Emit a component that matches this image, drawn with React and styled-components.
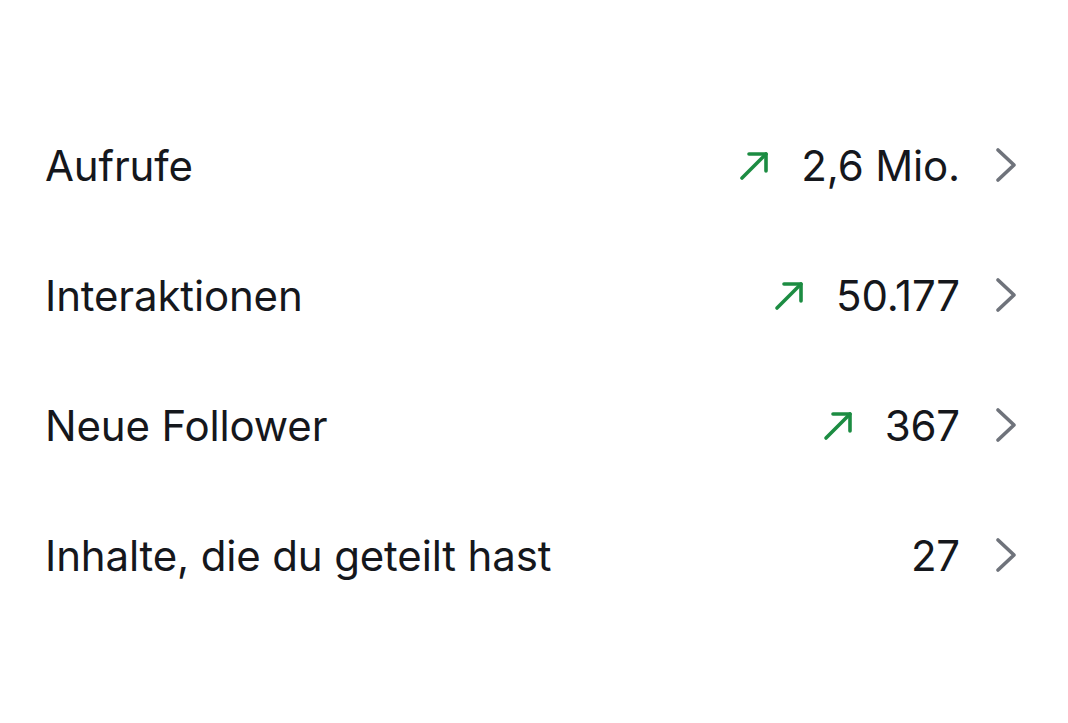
import React from "react";
import styled, { createGlobalStyle } from "styled-components";

const Global = createGlobalStyle`
  html, body { margin: 0; padding: 0; background: #ffffff; }
  body { font-family: Inter, "Noto Sans", sans-serif; -webkit-font-smoothing: antialiased; }
`;

const List = styled.div`
  display: flex;
  flex-direction: column;
  padding: 100px 50px 0 45px;
`;

const Row = styled.div`
  display: flex;
  align-items: center;
  height: 130px;
`;

const Label = styled.div`
  flex: 1;
  font-size: 42px;
  color: #15171c;
  letter-spacing: -0.15px;
`;

const Trend = styled.svg`
  width: 32px;
  height: 32px;
  margin-right: 30px;
`;

const Value = styled.div`
  font-size: 42px;
  color: #15171c;
  letter-spacing: -0.15px;
`;

const Chevron = styled.svg`
  width: 24px;
  height: 36px;
  margin-left: 34px;
`;

const rows = [
  { label: "Aufrufe", value: "2,6 Mio.", up: true },
  { label: "Interaktionen", value: "50.177", up: true },
  { label: "Neue Follower", value: "367", up: true },
  { label: "Inhalte, die du geteilt hast", value: "27", up: false },
];

export default function App() {
  return (
    <>
      <Global />
      <List>
        {rows.map((r) => (
          <Row key={r.label}>
            <Label>{r.label}</Label>
            {r.up && (
              <Trend viewBox="0 0 32 32" fill="none" stroke="#1c8c42" strokeWidth="3.6" strokeLinecap="round" strokeLinejoin="round">
                <path d="M3 29 L27 5" />
                <path d="M10 5 H27 V22" />
              </Trend>
            )}
            <Value>{r.value}</Value>
            <Chevron viewBox="0 0 24 36" fill="none" stroke="#6f737b" strokeWidth="3.7" strokeLinecap="round" strokeLinejoin="round">
              <path d="M4 3 L20 18 L4 33" />
            </Chevron>
          </Row>
        ))}
      </List>
    </>
  );
}
